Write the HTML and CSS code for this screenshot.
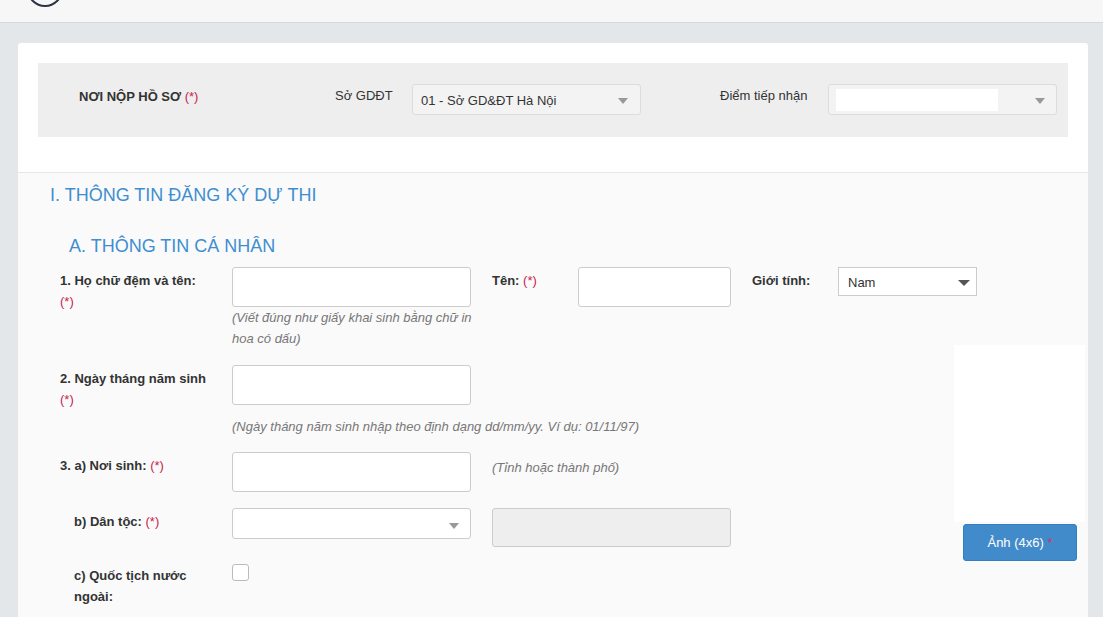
FILE: index.html
```html
<!DOCTYPE html>
<html lang="vi">
<head>
<meta charset="utf-8">
<title>Đăng ký dự thi</title>
<link rel="stylesheet" href="styles.css">
</head>
<body>
<header class="topbar">
  <div class="logo"></div>
  <div class="site-title">Hệ thống đăng ký dự thi trực tuyến trung học phổ thông</div>
</header>

<main class="card">
  <section class="card-top">
    <div class="panel">
      <div class="plabel-main">NƠI NỘP HỒ SƠ <span class="req">(*)</span></div>
      <div class="plabel">Sở GDĐT</div>
      <div class="pselect">
        <span>01 - Sở GD&amp;ĐT Hà Nội</span>
        <span class="caret"></span>
      </div>
      <div class="plabel plabel-2">Điểm tiếp nhận</div>
      <div class="pselect pselect-2">
        <span class="pselect-fill"></span>
        <span class="caret"></span>
      </div>
    </div>
  </section>

  <section class="card-body">
    <div class="form-main">
      <h2 class="title-main">I. THÔNG TIN ĐĂNG KÝ DỰ THI</h2>
      <h3 class="title-sub">A. THÔNG TIN CÁ NHÂN</h3>

      <div class="rows">
        <div class="row">
          <div class="flabel">1. Họ chữ đệm và tên:<br><span class="req">(*)</span></div>
          <div class="fcol">
            <div class="input"></div>
            <div class="help">(Viết đúng như giấy khai sinh bằng chữ in<br>hoa có dấu)</div>
          </div>
          <div class="flabel flabel-inline">Tên: <span class="req">(*)</span></div>
          <div class="input input-short"></div>
          <div class="flabel flabel-inline">Giới tính:</div>
          <div class="gselect">
            <span>Nam</span>
            <span class="caret caret-dark"></span>
          </div>
        </div>

        <div class="row row-gap16">
          <div class="flabel">2. Ngày tháng năm sinh<br><span class="req">(*)</span></div>
          <div class="fcol">
            <div class="input"></div>
            <div class="help help-spaced">(Ngày tháng năm sinh nhập theo định dạng dd/mm/yy. Ví dụ: 01/11/97)</div>
          </div>
        </div>

        <div class="row row-gap15">
          <div class="flabel">3. a) Nơi sinh: <span class="req">(*)</span></div>
          <div class="input"></div>
          <div class="help help-side">(Tỉnh hoặc thành phố)</div>
        </div>

        <div class="row row-gap16">
          <div class="flabel flabel-sub">b) Dân tộc: <span class="req">(*)</span></div>
          <div class="fselect">
            <span></span>
            <span class="caret"></span>
          </div>
          <div class="disabled-box"></div>
        </div>

        <div class="row row-gap15">
          <div class="flabel flabel-sub">c) Quốc tịch nước<br>ngoài:</div>
          <div class="checkbox"></div>
        </div>
      </div>
    </div>

    <aside class="photo-col">
      <div class="photo"></div>
      <button class="photo-btn" type="button">Ảnh (4x6) <span class="btn-req">*</span></button>
    </aside>
  </section>
</main>
</body>
</html>
```

FILE: styles.css
```css
* {
  box-sizing: border-box;
}

html, body {
  margin: 0;
  padding: 0;
}

body {
  background: #e4e7ea;
  font-family: "Liberation Sans", Arial, sans-serif;
  font-size: 13px;
  color: #333;
}

/* top bar (scrolled, mostly hidden) */
.topbar {
  height: 23px;
  background: #f7f7f7;
  border-bottom: 1px solid #d5d8dc;
  display: flex;
  align-items: flex-end;
  overflow: hidden;
  padding-left: 27px;
}

.logo {
  flex: none;
  width: 36px;
  height: 36px;
  border: 2px solid #2b3444;
  border-radius: 50%;
  margin-bottom: 15px;
}

.site-title {
  flex: none;
  margin-left: 32px;
  font-size: 18px;
  line-height: 20px;
  color: #333;
  white-space: nowrap;
  margin-bottom: 22px;
}

/* card */
.card {
  margin: 20px 15px 0 18px;
  background: #fff;
  border-radius: 3px 3px 0 0;
}

.card-top {
  padding: 20px 20px 35px;
}

.panel {
  background: #eeeeee;
  height: 74px;
  padding: 21px 11px 0 41px;
  display: flex;
  align-items: flex-start;
}

.plabel-main {
  width: 256px;
  padding-top: 4px;
  line-height: 18px;
  font-weight: bold;
  color: #333;
}

.plabel {
  width: 77px;
  padding-top: 3px;
  line-height: 18px;
  color: #333;
}

.plabel-2 {
  margin-left: 79px;
  width: 108px;
}

.pselect {
  width: 229px;
  height: 31px;
  border: 1px solid #dcdcdc;
  border-radius: 3px;
  background: #f3f3f3;
  display: flex;
  align-items: center;
  justify-content: space-between;
  padding: 1px 12px 0 8px;
  color: #333;
}

.pselect-2 {
  padding: 0 11px 0 7px;
}

.pselect-fill {
  display: block;
  width: 162px;
  height: 22px;
  background: #fff;
}

.caret {
  width: 0;
  height: 0;
  border-left: 5px solid transparent;
  border-right: 5px solid transparent;
  border-top: 6px solid #999;
  margin-top: 2px;
}

.caret-dark {
  border-left-width: 6px;
  border-right-width: 6px;
  border-top: 6px solid #555;
  margin-top: 0;
}

/* body section */
.card-body {
  border-top: 1px solid #e6e6e6;
  background: #fafafa;
  padding: 12px 3px 60px 32px;
  display: flex;
}

.form-main {
  flex: 1;
  min-width: 0;
}

.title-main {
  margin: 0;
  font-size: 18px;
  line-height: 20px;
  font-weight: normal;
  color: #3e8ed0;
}

.title-sub {
  margin: 31px 0 0;
  padding-left: 19px;
  font-size: 18px;
  line-height: 20px;
  font-weight: normal;
  color: #3e8ed0;
}

.rows {
  margin-top: 11px;
  padding-left: 10px;
  display: flex;
  flex-direction: column;
}

.row {
  display: flex;
  align-items: flex-start;
}

.row-gap16 {
  margin-top: 16px;
}

.row-gap15 {
  margin-top: 15px;
}

.flabel {
  flex: none;
  width: 172px;
  padding-top: 3px;
  line-height: 21px;
  font-weight: bold;
  color: #333;
}

.flabel-sub {
  padding-left: 14px;
}

.flabel-inline {
  width: 86px;
  margin-left: 21px;
}

.req {
  color: #c7254e;
  font-weight: normal;
}

.fcol {
  flex: none;
  width: 239px;
}

.input {
  flex: none;
  width: 239px;
  height: 40px;
  background: #fff;
  border: 1px solid #ccc;
  border-radius: 3px;
}

.input-short {
  width: 153px;
}

.help {
  font-style: italic;
  color: #777;
  line-height: 21px;
  white-space: nowrap;
}

.help-spaced {
  margin-top: 11px;
}

.help-side {
  margin-left: 21px;
  padding-top: 5px;
}

.gselect {
  flex: none;
  width: 139px;
  height: 29px;
  background: #fff;
  border: 1px solid #ccc;
  display: flex;
  align-items: center;
  justify-content: space-between;
  padding: 2px 6px 0 9px;
  color: #333;
}

.fselect {
  flex: none;
  width: 239px;
  height: 31px;
  background: #fff;
  border: 1px solid #ccc;
  border-radius: 3px;
  display: flex;
  align-items: center;
  justify-content: space-between;
  padding: 2px 11px 0 8px;
}

.disabled-box {
  flex: none;
  margin-left: 21px;
  width: 239px;
  height: 39px;
  background: #eeeeee;
  border: 1px solid #ccc;
  border-radius: 3px;
}

.checkbox {
  flex: none;
  width: 17px;
  height: 17px;
  margin-top: 2px;
  background: #fff;
  border: 1px solid #bbb;
  border-radius: 3px;
}

/* photo */
.photo-col {
  flex: none;
  width: 131px;
  margin-top: 160px;
}

.photo {
  height: 177px;
  background: #fff;
}

.photo-btn {
  display: block;
  margin: 2px 0 0 9px;
  width: 114px;
  height: 37px;
  background: #428bca;
  border: 1px solid #357ebd;
  border-radius: 3px;
  color: #fff;
  font-family: "Liberation Sans", Arial, sans-serif;
  font-size: 13px;
  padding: 0;
  text-align: center;
}

.btn-req {
  color: #d2326a;
}
```
